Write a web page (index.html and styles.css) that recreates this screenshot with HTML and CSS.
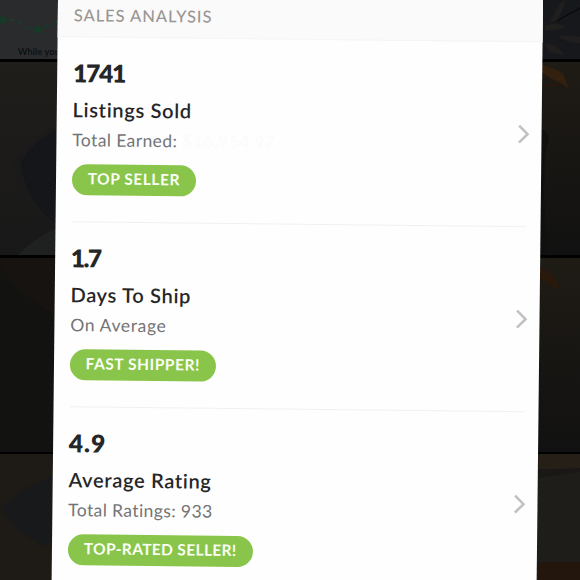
FILE: index.html
```html
<!DOCTYPE html>
<html lang="en">
<head>
  <meta charset="UTF-8">
  <title>Sales Analysis</title>
  <link rel="stylesheet" href="styles.css">
</head>
<body>

<div class="page">

  <!-- dimmed listing feed behind the panel -->
  <div class="feed">
    <svg width="580" height="580" viewBox="0 0 580 580">
      <defs>
        <linearGradient id="shade" x1="0" y1="0" x2="0" y2="1">
          <stop offset="0" stop-color="#201e1b"/>
          <stop offset="1" stop-color="#181818"/>
        </linearGradient>
        <linearGradient id="wall" x1="0" y1="0" x2="0" y2="1">
          <stop offset="0" stop-color="#1f1b15"/>
          <stop offset="1" stop-color="#111111"/>
        </linearGradient>
        <pattern id="mesh" width="4" height="3" patternUnits="userSpaceOnUse" patternTransform="rotate(15)">
          <rect width="4" height="3" fill="#17181b"/>
          <path d="M0 1h2M2 2.5h2" stroke="#101114"/>
        </pattern>
      </defs>
      <rect width="580" height="580" fill="#020202"/>

      <rect width="70" height="59" fill="#2a2b2c"/>
      <path d="M9 20H14M18 21.500L23 24M27 26.500L31 28.500M44 27.500L49 25M54 23L60 21" fill="none" stroke="#1b3a2b" stroke-width="2"/>
      <circle cx="3" cy="20" r="3.800" fill="#163a28"/>
      <circle cx="37.500" cy="29.500" r="3.800" fill="#163a28"/>
      <text class="feed-text" x="18" y="55">While you</text>

      <rect y="62" width="70" height="193" fill="url(#shade)"/>
      <path d="M70 118Q22 144 13 165Q16 192 42 217L70 240Z" fill="#1a1a1b"/>
      <path d="M70 122Q28 144 20 163Q22 184 38 207Q48 222 70 230Z" fill="url(#mesh)"/>
      <path d="M18 255Q34 238 60 226V255Z" fill="#1f2121"/>

      <rect y="258" width="70" height="194" fill="#121211"/>
      <path d="M0 258H58V318Q24 298 0 268Z" fill="#161310"/>

      <rect y="454" width="70" height="126" fill="#1e1b16"/>
      <path d="M60 472L22 490L1 509L18 530L44 547L60 535Z" fill="#17191b"/>

      <rect x="530" width="50" height="59" fill="#16181c"/>
      <path d="M550 22L560 3L566 0L558 20L578 10L566 19Z" fill="#201f1e"/>
      <path d="M545 26Q556 22 566 26Q558 32 545 30ZM558 36Q570 34 580 37V43Q568 44 558 36ZM545 44Q556 42 564 55L549 52Z" fill="#201f1e"/>
      <path d="M557 21L580 8" stroke="#0c0d10" stroke-width="2"/>
      <rect x="530" y="62" width="50" height="193" fill="url(#wall)"/>
      <path d="M535 64Q555 67 563 74L569 89L561 83L550 78L535 68Z" fill="#33200f"/>
      <path d="M540 85H562" stroke="#24170d" stroke-width="2"/>
      <path d="M540 128Q549 133 549 139L545 155L544 200L548 255H535V128Z" fill="#11100f"/>
      <rect x="530" y="258" width="50" height="194" fill="url(#wall)"/>
      <path d="M535 266Q548 270 555 277L560 290L552 286L535 277Z" fill="#29190d"/>
      <rect x="530" y="454" width="50" height="126" fill="#1f1d19"/>
      <rect x="530" y="454" width="50" height="15" fill="#261f17"/>
      <path d="M530 470L580 468V472L530 479Z" fill="#191816"/>
      <rect x="530" y="562" width="50" height="18" fill="#23160c"/>
    </svg>
  </div>

  <div class="panel">
    <h1 class="panel-header">SALES ANALYSIS</h1>

    <div class="stat">
      <div class="info">
        <p class="number">1741</p>
        <p class="label">Listings Sold</p>
        <p class="detail">Total Earned: <span class="erased">$16,954.97</span></p>
        <span class="badge badge-top">TOP SELLER</span>
      </div>
      <svg class="arrow" width="12" height="20" viewBox="0 0 12 20"><path d="M1.500 1.500L10 10L1.500 18.500"/></svg>
    </div>

    <div class="stat">
      <div class="info">
        <p class="number number-ship">1.7</p>
        <p class="label">Days To Ship</p>
        <p class="detail detail-ship">On Average</p>
        <span class="badge badge-fast">FAST SHIPPER!</span>
      </div>
      <svg class="arrow" width="12" height="20" viewBox="0 0 12 20"><path d="M1.500 1.500L10 10L1.500 18.500"/></svg>
    </div>

    <div class="stat">
      <div class="info">
        <p class="number number-rating">4.9</p>
        <p class="label">Average Rating</p>
        <p class="detail">Total Ratings: 933</p>
        <span class="badge badge-rated">TOP-RATED SELLER!</span>
      </div>
      <svg class="arrow" width="12" height="20" viewBox="0 0 12 20"><path d="M1.500 1.500L10 10L1.500 18.500"/></svg>
    </div>
  </div>

</div>

</body>
</html>
```

FILE: styles.css
```css
body {
  margin: 0;
  background: #020202;
  font-family: Lato, "Liberation Sans", sans-serif;
}

.page {
  display: flow-root;
  width: 580px;
  height: 580px;
  overflow: hidden;
  position: relative;
}

.feed {
  position: absolute;
  top: 0;
  left: 0;
}

.feed-text {
  font-size: 9px;
  letter-spacing: 0.2px;
  fill: #08090a;
}

.panel {
  position: relative;
  box-sizing: border-box;
  width: 484.5px;
  height: 612px;
  margin: -20px 0 0 58px;
  background: #fefefe;
  transform: rotate(0.63deg);
  transform-origin: 0 20px;
}

.panel-header {
  box-sizing: border-box;
  height: 57px;
  margin: 0;
  padding: 20px 0 0 16px;
  background: #fafafa;
  border-bottom: 1px solid #f4f4f3;
  color: #9a9693;
  font-size: 16.5px;
  font-weight: 500;
  line-height: 31px;
  letter-spacing: 0.95px;
}

.stat {
  box-sizing: border-box;
  height: 185px;
  margin: 0 14px 0 15.8px;
  padding-top: 18px;
  display: flex;
  justify-content: space-between;
  border-bottom: 1px solid #f1f1f1;
}

.stat:last-child {
  height: 180px;
  border-bottom: none;
}

.info p {
  margin: 0;
  white-space: nowrap;
}

.info .number {
  color: #252627;
  font-size: 24.5px;
  font-weight: 800;
  line-height: 36px;
  letter-spacing: -1.2px;
}

.info .number-ship {
  letter-spacing: -1.6px;
}

.info .number-rating {
  letter-spacing: 1px;
}

.info .label {
  color: #252627;
  font-size: 20px;
  font-weight: 600;
  line-height: 36px;
  letter-spacing: 0.7px;
}

.info .detail {
  color: #737476;
  font-size: 17.5px;
  line-height: 26px;
  letter-spacing: 0.4px;
}

.info .detail-ship {
  letter-spacing: 0.65px;
}

.erased {
  color: #fbfbfb;
}

.badge {
  display: block;
  box-sizing: border-box;
  height: 31px;
  margin-top: 11px;
  border-radius: 16px;
  background: #89c54a;
  color: #fbfff5;
  font-size: 15.5px;
  font-weight: 700;
  line-height: 29px;
  letter-spacing: 0.55px;
  text-align: center;
  white-space: nowrap;
}

.badge-top {
  width: 124px;
}

.badge-fast {
  width: 146px;
}

.badge-rated {
  width: 185px;
  letter-spacing: 0.35px;
}

.arrow {
  margin: 64px -2px 0 0;
  fill: none;
  stroke: #c1c1c4;
  stroke-width: 2.6;
}
```
